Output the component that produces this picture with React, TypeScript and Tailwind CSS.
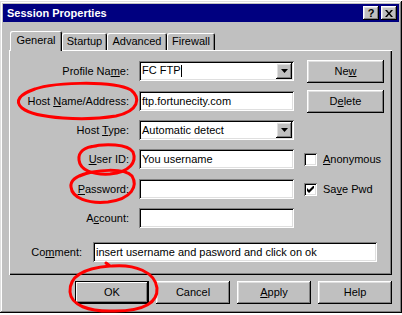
import React from "react";

const raised =
  "bg-[#c0c0c0] shadow-[inset_-1px_-1px_#000,inset_1px_1px_#fff,inset_-2px_-2px_#808080,inset_2px_2px_#dfdfdf]";
const sunken =
  "bg-white shadow-[inset_1px_1px_#808080,inset_-1px_-1px_#fff,inset_2px_2px_#000,inset_-2px_-2px_#dfdfdf]";

function Field({ value, combo, caret, className }: { value?: string; combo?: boolean; caret?: boolean; className: string }) {
  return (
    <div className={`${sunken} ${className} h-[20px] flex items-center pl-[3px] pr-[2px] overflow-hidden`}>
      <span className="flex-1 whitespace-nowrap leading-none">
        {value}
        {caret && <span className="inline-block w-px h-[12px] bg-black align-middle -mt-[2px]" />}
      </span>
      {combo && (
        <div className={`${raised} w-[16px] h-[16px] flex items-center justify-center`}>
          <svg width="7" height="4" viewBox="0 0 7 4">
            <path d="M0 0h7L3.5 4z" fill="#000" />
          </svg>
        </div>
      )}
    </div>
  );
}

function Btn({ children, className, def }: { children: React.ReactNode; className: string; def?: boolean }) {
  return (
    <div
      className={`${className} h-[23px] flex items-center justify-center ${
        def
          ? "bg-[#c0c0c0] shadow-[inset_0_0_0_1px_#000,inset_-2px_-2px_#000,inset_2px_2px_#fff,inset_-3px_-3px_#808080]"
          : raised
      }`}
    >
      {children}
    </div>
  );
}

function Check({ checked }: { checked?: boolean }) {
  return (
    <div className={`${sunken} w-[13px] h-[13px] flex items-center justify-center`}>
      {checked && (
        <svg width="7" height="7" viewBox="0 0 7 7">
          <path d="M0 2v3l2 2 5-5V-1L2 4z" fill="#000" />
        </svg>
      )}
    </div>
  );
}

export default function App() {
  return (
    <div className="relative w-[402px] h-[315px] bg-white pt-px font-['Liberation_Sans',Arial,sans-serif] text-[11px] text-black">
      <div className="w-[402px] h-[312px] bg-[#c0c0c0] p-[3px] shadow-[inset_-1px_-1px_#000,inset_1px_1px_#dfdfdf,inset_-2px_-2px_#808080,inset_2px_2px_#fff]">
        {/* title bar */}
        <div className="h-[18px] bg-[#000080] flex items-center justify-between pl-[4px] pr-[2px]">
          <span className="text-white font-bold leading-none">Session Properties</span>
          <div className="flex gap-[2px]">
            <div className={`${raised} w-[16px] h-[14px] flex items-center justify-center font-bold leading-none text-[11px]`}>?</div>
            <div className={`${raised} w-[16px] h-[14px] flex items-center justify-center`}>
              <svg width="8" height="7" viewBox="0 0 8 7">
                <path d="M0 0h2l2 2.5L6 0h2L5 3.5 8 7H6L4 4.5 2 7H0l3-3.5z" fill="#000" />
              </svg>
            </div>
          </div>
        </div>

        {/* tabs */}
        <div className="mt-[9px] ml-[7px] h-[19px] flex items-end">
          <div className="relative z-10 -mb-px h-[20px] w-[52px] bg-[#c0c0c0] rounded-t-[2px] shadow-[inset_1px_1px_#fff,inset_-1px_0_#000,inset_-2px_0_#808080] flex items-center justify-center pb-[1px]">
            General
          </div>
          <div className="h-[17px] w-[45px] rounded-t-[2px] shadow-[inset_1px_1px_#fff,inset_-1px_0_#000,inset_-2px_0_#808080] flex items-center justify-center">
            Startup
          </div>
          <div className="h-[17px] w-[60px] rounded-t-[2px] shadow-[inset_1px_1px_#fff,inset_-1px_0_#000,inset_-2px_0_#808080] flex items-center justify-center">
            Advanced
          </div>
          <div className="h-[17px] w-[48px] rounded-t-[2px] shadow-[inset_1px_1px_#fff,inset_-1px_0_#000,inset_-2px_0_#808080] flex items-center justify-center">
            Firewall
          </div>
        </div>

        {/* panel */}
        <div className="ml-[6px] w-[383px] h-[225px] pt-[11px] shadow-[inset_1px_1px_#fff,inset_-1px_-1px_#000,inset_-2px_-2px_#808080]">
          <div className="flex h-[20px] items-center">
            <div className="w-[120px] text-right">Profile Na<u>m</u>e:</div>
            <Field className="ml-[10px] w-[155px]" value="FC FTP" caret combo />
            <Btn className="ml-[13px] w-[77px]">Ne<u>w</u></Btn>
          </div>
          <div className="mt-[10px] flex h-[20px] items-center">
            <div className="w-[120px] text-right">Host <u>N</u>ame/Address:</div>
            <Field className="ml-[10px] w-[155px]" value="ftp.fortunecity.com" />
            <Btn className="ml-[13px] w-[77px]">D<u>e</u>lete</Btn>
          </div>
          <div className="mt-[9px] flex h-[20px] items-center">
            <div className="w-[120px] text-right">Host <u>T</u>ype:</div>
            <Field className="ml-[10px] w-[155px]" value="Automatic detect" combo />
          </div>
          <div className="mt-[9px] flex h-[20px] items-center">
            <div className="w-[120px] text-right"><u>U</u>ser ID:</div>
            <Field className="ml-[10px] w-[155px]" value="You username" />
            <div className="ml-[10px] flex items-center gap-[6px]">
              <Check />
              <span><u>A</u>nonymous</span>
            </div>
          </div>
          <div className="mt-[10px] flex h-[20px] items-center">
            <div className="w-[120px] text-right"><u>P</u>assword:</div>
            <Field className="ml-[10px] w-[155px]" value="" />
            <div className="ml-[10px] flex items-center gap-[6px]">
              <Check checked />
              <span>Sa<u>v</u>e Pwd</span>
            </div>
          </div>
          <div className="mt-[9px] flex h-[20px] items-center">
            <div className="w-[120px] text-right">A<u>c</u>count:</div>
            <Field className="ml-[10px] w-[155px]" value="" />
          </div>
          <div className="mt-[14px] flex h-[20px] items-center">
            <div className="w-[73px] text-right">Co<u>m</u>ment:</div>
            <Field className="ml-[11px] w-[284px]" value="insert username and pasword and click on ok" />
          </div>
        </div>

        {/* dialog buttons */}
        <div className="ml-[6px] w-[383px] mt-[6px] flex justify-end gap-[7px]">
          <Btn className="w-[74px]" def>OK</Btn>
          <Btn className="w-[74px]">Cancel</Btn>
          <Btn className="w-[74px]"><span><u>A</u>pply</span></Btn>
          <Btn className="w-[74px]">Help</Btn>
        </div>
      </div>

      {/* red hand-drawn annotations */}
      <svg className="absolute left-0 top-0 pointer-events-none" width="402" height="315" viewBox="0 0 402 315" fill="none">
        <g stroke="#ff0000" strokeWidth="3" strokeLinecap="round" strokeLinejoin="round">
          <path d="M30 91C48 82 112 80 131 90C141 98 139 111 116 116C86 121 36 119 22 108C14 101 20 94 35 89" />
          <path d="M90 147C105 143 128 144 133 152C137 162 130 172 110 174C92 175 80 170 79 160C78 152 84 147 96 146" />
          <path d="M80 176C95 169 125 168 132 176C138 186 132 199 108 202C88 204 72 198 71 187C70 180 76 176 88 173" />
          <path d="M112 266C135 264 155 272 157 288C158 302 145 311 115 311C88 312 71 305 70 292C69 276 85 268 110 266L106 263" />
        </g>
      </svg>
    </div>
  );
}
